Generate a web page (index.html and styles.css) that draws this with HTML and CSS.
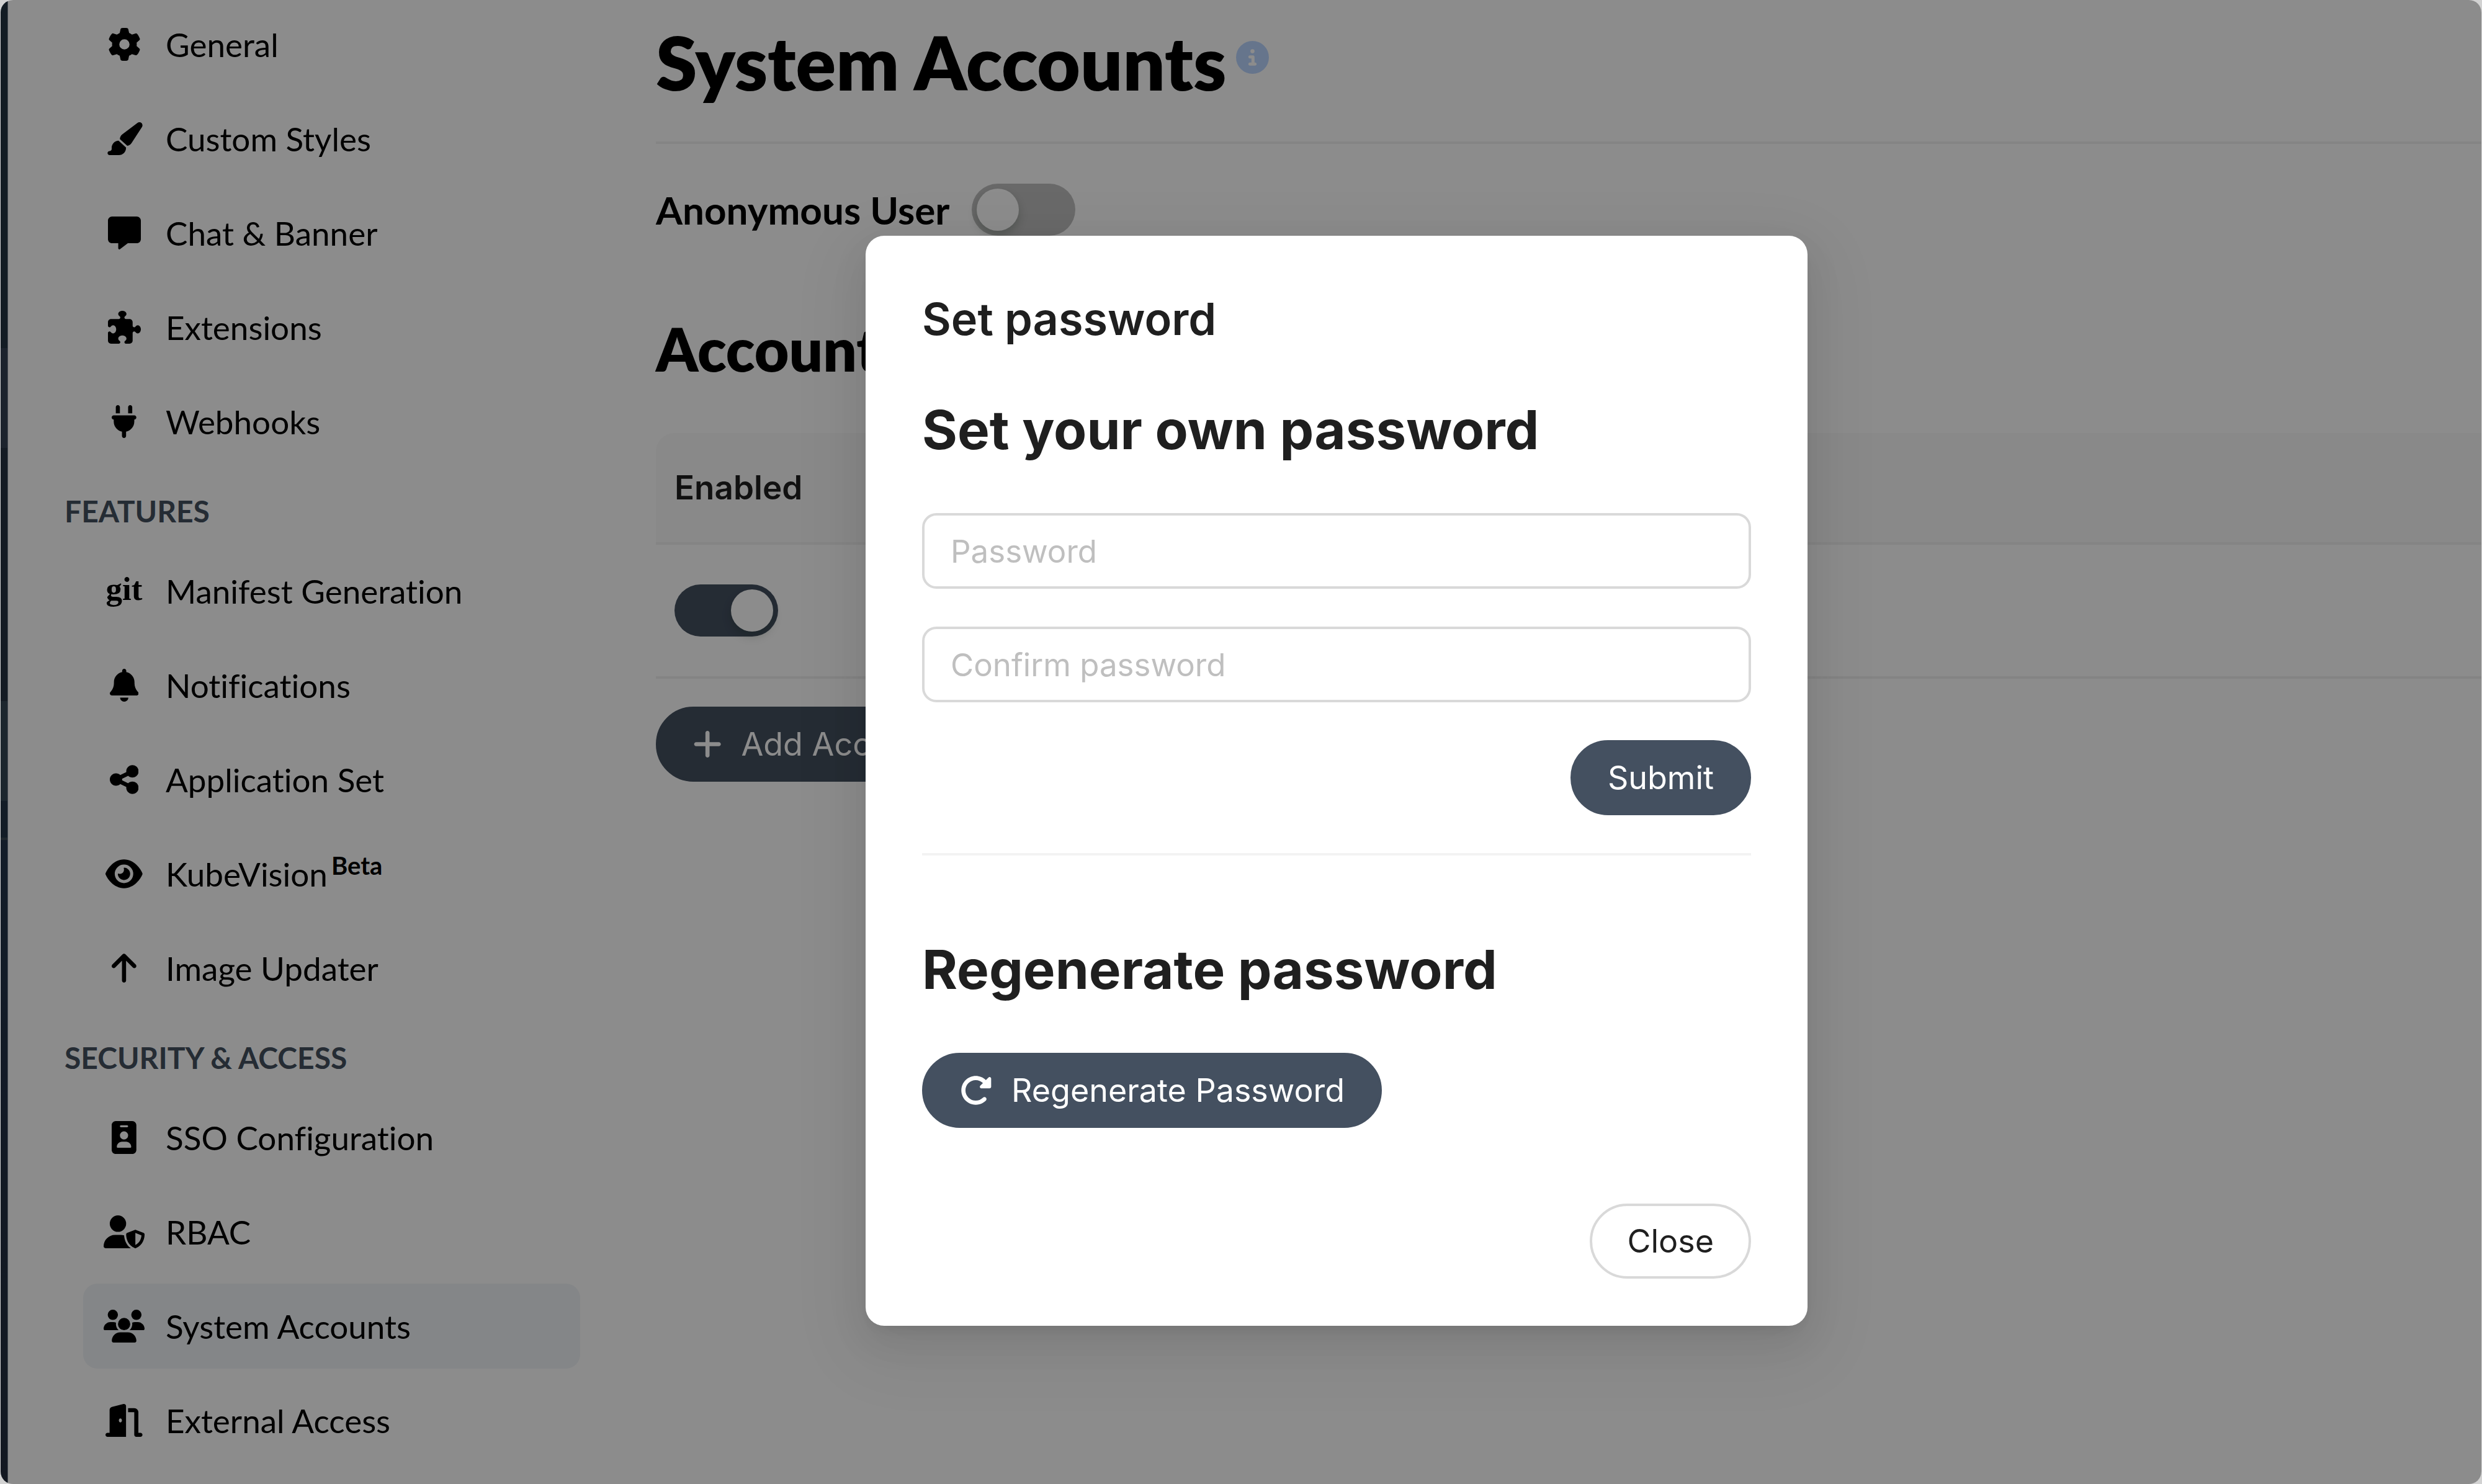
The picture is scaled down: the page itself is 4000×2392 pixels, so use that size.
FILE: index.html
```html
<!DOCTYPE html>
<html lang="en">
<head>
<meta charset="utf-8">
<meta name="viewport" content="width=device-width, initial-scale=1">
<title>System Accounts</title>
<link rel="stylesheet" href="styles.css">
</head>
<body>
<div class="window">
  <div class="rail"></div>

  <nav class="sidebar" aria-label="Settings">
    <ul class="nav-list">
      <li><a class="nav-item" href="#general"><span class="nav-icon"><svg class="icon" viewBox="0 0 512 512"><path d="M495.900 166.600c3.200 8.700 .5 18.400-6.400 24.600l-43.300 39.400c1.100 8.300 1.700 16.800 1.700 25.400s-.6 17.100-1.700 25.400l43.300 39.400c6.900 6.200 9.600 15.900 6.400 24.600c-4.400 11.900-9.700 23.300-15.800 34.300l-4.700 8.100c-6.600 11-14 21.400-22.100 31.200c-5.900 7.200-15.700 9.600-24.500 6.800l-55.700-17.700c-13.400 10.300-28.200 18.900-44 25.400l-12.500 57.100c-2 9.100-9 16.300-18.200 17.800c-13.800 2.300-28 3.500-42.500 3.500s-28.700-1.200-42.500-3.500c-9.200-1.500-16.200-8.700-18.200-17.800l-12.500-57.100c-15.800-6.500-30.600-15.100-44-25.400L83.100 425.900c-8.800 2.800-18.600 .3-24.500-6.800c-8.100-9.800-15.500-20.200-22.100-31.200l-4.700-8.100c-6.100-11-11.400-22.400-15.800-34.300c-3.200-8.700-.5-18.400 6.400-24.600l43.300-39.400C64.600 273.100 64 264.600 64 256s.6-17.100 1.700-25.400L22.400 191.200c-6.900-6.200-9.600-15.900-6.400-24.600c4.400-11.900 9.700-23.300 15.800-34.300l4.700-8.100c6.600-11 14-21.400 22.100-31.200c5.900-7.200 15.700-9.600 24.500-6.800l55.700 17.700c13.400-10.300 28.200-18.900 44-25.400l12.500-57.100c2-9.100 9-16.300 18.200-17.800C227.300 1.200 241.500 0 256 0s28.700 1.200 42.500 3.500c9.200 1.500 16.200 8.700 18.200 17.800l12.500 57.100c15.800 6.500 30.600 15.100 44 25.400l55.700-17.700c8.800-2.800 18.600-.3 24.500 6.800c8.100 9.800 15.500 20.200 22.100 31.200l4.700 8.100c6.100 11 11.400 22.400 15.800 34.300zM256 336a80 80 0 1 0 0-160 80 80 0 1 0 0 160z"/></svg></span>General</a></li>
      <li><a class="nav-item" href="#custom-styles"><span class="nav-icon"><svg class="icon" viewBox="0 0 576 512"><path d="M339.300 367.100c27.300-3.900 51.900-19.400 67.200-42.900L568.200 74.100c12.600-19.500 9.400-45.300-7.600-61.200S517.700-4.400 499.100 9.600L262.400 187.200c-24 18-38.200 46.100-38.400 76.100L339.300 367.100zm-19.600 25.400l-116-104.400C143.900 290.300 96 339.600 96 400c0 3.900 .2 7.800 .6 11.600C98.400 429.100 86.400 448 68.800 448H64c-17.700 0-32 14.300-32 32s14.300 32 32 32H208c61.900 0 112-50.100 112-112c0-2.500-.1-5-.2-7.500z"/></svg></span>Custom Styles</a></li>
      <li><a class="nav-item" href="#chat-banner"><span class="nav-icon"><svg class="icon" viewBox="0 0 512 512"><path d="M64 0C28.700 0 0 28.700 0 64V352c0 35.300 28.700 64 64 64h96v80c0 6.100 3.400 11.600 8.800 14.300s11.900 2.100 16.800-1.500L309.300 416H448c35.300 0 64-28.700 64-64V64c0-35.300-28.700-64-64-64H64z"/></svg></span>Chat &amp; Banner</a></li>
      <li><a class="nav-item" href="#extensions"><span class="nav-icon"><svg class="icon" viewBox="0 0 512 512"><path d="M192 104.800c0-9.200-5.800-17.300-13.200-22.800C167.200 73.300 160 61.300 160 48c0-26.500 28.700-48 64-48s64 21.500 64 48c0 13.300-7.200 25.300-18.800 34c-7.400 5.500-13.200 13.600-13.200 22.800c0 12.800 10.400 23.200 23.200 23.200H336c26.500 0 48 21.500 48 48v56.800c0 12.800 10.400 23.200 23.200 23.200c9.200 0 17.300-5.800 22.800-13.200c8.700-11.600 20.700-18.800 34-18.800c26.500 0 48 28.700 48 64s-21.500 64-48 64c-13.300 0-25.300-7.200-34-18.800c-5.500-7.400-13.600-13.200-22.800-13.200c-12.800 0-23.200 10.400-23.200 23.200V464c0 26.500-21.500 48-48 48H279.200c-12.800 0-23.200-10.400-23.200-23.200c0-9.200 5.800-17.300 13.200-22.800c11.600-8.700 18.800-20.700 18.800-34c0-26.500-28.700-48-64-48s-64 21.500-64 48c0 13.300 7.200 25.300 18.800 34c7.400 5.500 13.200 13.600 13.200 22.800c0 12.800-10.400 23.200-23.200 23.200H48c-26.500 0-48-21.500-48-48V343.200C0 330.400 10.400 320 23.200 320c9.200 0 17.300 5.800 22.800 13.200C54.700 344.800 66.700 352 80 352c26.500 0 48-28.700 48-64s-21.500-64-48-64c-13.300 0-25.300 7.200-34 18.800C40.500 250.200 32.400 256 23.200 256C10.400 256 0 245.600 0 232.800V176c0-26.500 21.500-48 48-48H168.800c12.800 0 23.200-10.400 23.200-23.200z"/></svg></span>Extensions</a></li>
      <li><a class="nav-item" href="#webhooks"><span class="nav-icon"><svg class="icon" viewBox="0 0 384 512"><path d="M96 0C78.300 0 64 14.300 64 32v96h64V32c0-17.700-14.300-32-32-32zM288 0c-17.700 0-32 14.300-32 32v96h64V32c0-17.700-14.300-32-32-32zM32 160c-17.700 0-32 14.300-32 32s14.300 32 32 32v32c0 77.400 55 142 128 156.800V480c0 17.700 14.300 32 32 32s32-14.300 32-32V412.800C297 398 352 333.400 352 256V224c17.700 0 32-14.300 32-32s-14.300-32-32-32H32z"/></svg></span>Webhooks</a></li>
    </ul>

    <h2 class="nav-heading">FEATURES</h2>
    <ul class="nav-list">
      <li><a class="nav-item" href="#manifest-generation"><span class="nav-icon git-mark" aria-hidden="true">git</span>Manifest Generation</a></li>
      <li><a class="nav-item" href="#notifications"><span class="nav-icon"><svg class="icon" viewBox="0 0 448 512"><path d="M224 0c-17.700 0-32 14.300-32 32V51.200C119 66 64 130.600 64 208v18.800c0 47-17.300 92.400-48.500 127.600l-7.400 8.300c-8.400 9.400-10.400 22.900-5.300 34.400S19.400 416 32 416H416c12.600 0 24-7.400 29.200-18.900s3.100-25-5.300-34.400l-7.400-8.300C401.300 319.200 384 273.900 384 226.800V208c0-77.400-55-142-128-156.800V32c0-17.700-14.300-32-32-32zm45.300 493.300c12-12 18.700-28.300 18.700-45.300H224 160c0 17 6.700 33.300 18.700 45.300s28.300 18.700 45.300 18.700s33.300-6.700 45.300-18.700z"/></svg></span>Notifications</a></li>
      <li><a class="nav-item" href="#application-set"><span class="nav-icon"><svg class="icon" viewBox="0 0 448 512"><path d="M352 224c53 0 96-43 96-96s-43-96-96-96s-96 43-96 96c0 4 .2 8 .7 11.900l-94.100 47C145.400 170.200 121.900 160 96 160c-53 0-96 43-96 96s43 96 96 96c25.900 0 49.400-10.200 66.600-26.900l94.100 47c-.5 3.900-.7 7.800-.7 11.900c0 53 43 96 96 96s96-43 96-96s-43-96-96-96c-25.900 0-49.400 10.200-66.600 26.900l-94.100-47c.5-3.900 .7-7.800 .7-11.900s-.2-8-.7-11.900l94.100-47C302.600 213.800 326.100 224 352 224z"/></svg></span>Application Set</a></li>
      <li><a class="nav-item" href="#kubevision"><span class="nav-icon"><svg class="icon" viewBox="0 0 576 512"><path d="M288 32c-80.800 0-145.500 36.800-192.600 80.600C48.600 156 17.300 208 2.500 243.700c-3.300 7.900-3.300 16.700 0 24.600C17.300 304 48.600 356 95.400 399.400C142.500 443.200 207.200 480 288 480s145.500-36.800 192.600-80.600c46.800-43.500 78.100-95.400 93-131.100c3.300-7.900 3.300-16.700 0-24.600c-14.900-35.700-46.200-87.700-93-131.100C433.500 68.800 368.800 32 288 32zM144 256a144 144 0 1 1 288 0 144 144 0 1 1 -288 0zm144-64c0 35.300-28.700 64-64 64c-7.100 0-13.900-1.200-20.300-3.300c-5.500-1.800-11.900 1.600-11.700 7.400c.3 6.900 1.300 13.800 3.200 20.700c13.700 51.200 66.400 81.600 117.600 67.900s81.600-66.400 67.900-117.600c-11.100-41.500-47.800-69.400-88.600-71.100c-5.800-.2-9.200 6.100-7.400 11.700c2.100 6.400 3.300 13.200 3.300 20.300z"/></svg></span><span>KubeVision<sup class="beta">Beta</sup></span></a></li>
      <li><a class="nav-item" href="#image-updater"><span class="nav-icon"><svg class="icon" viewBox="0 0 384 512"><path d="M214.600 41.400c-12.500-12.500-32.800-12.500-45.300 0l-160 160c-12.500 12.500-12.500 32.800 0 45.300s32.800 12.500 45.300 0L160 141.200V448c0 17.700 14.300 32 32 32s32-14.300 32-32V141.200L329.400 246.600c12.500 12.500 32.800 12.500 45.300 0s12.500-32.800 0-45.300l-160-160z"/></svg></span>Image Updater</a></li>
    </ul>

    <h2 class="nav-heading">SECURITY &amp; ACCESS</h2>
    <ul class="nav-list">
      <li><a class="nav-item" href="#sso"><span class="nav-icon"><svg class="icon" viewBox="0 0 384 512"><path d="M64 0C28.700 0 0 28.700 0 64V448c0 35.300 28.700 64 64 64H320c35.300 0 64-28.700 64-64V64c0-35.300-28.700-64-64-64H64zm96 320h64c44.200 0 80 35.800 80 80c0 8.800-7.200 16-16 16H96c-8.800 0-16-7.200-16-16c0-44.200 35.800-80 80-80zm-32-96a64 64 0 1 1 128 0 64 64 0 1 1 -128 0zM144 64h96c8.800 0 16 7.200 16 16s-7.200 16-16 16H144c-8.800 0-16-7.200-16-16s7.200-16 16-16z"/></svg></span>SSO Configuration</a></li>
      <li><a class="nav-item" href="#rbac"><span class="nav-icon"><svg class="icon" viewBox="0 0 640 512"><path d="M224 256A128 128 0 1 0 224 0a128 128 0 1 0 0 256zm-45.700 48C79.800 304 0 383.800 0 482.300C0 498.700 13.300 512 29.700 512H418.300c1.800 0 3.500-.2 5.300-.5c-76.300-55.100-99.800-141-103.100-200.200c-16.100-4.800-33.100-7.300-50.700-7.300H178.300zm308.800-78.300l-120 48C358 277.400 352 286.200 352 296c0 63.300 25.900 168.800 134.800 214.200c5.900 2.500 12.600 2.500 18.500 0C614.100 464.800 640 359.300 640 296c0-9.800-6-18.600-15.100-22.300l-120-48c-5.700-2.300-12.100-2.300-17.800 0zM591.400 312c-3.900 50.700-27.200 116.700-95.400 149.700V273.800L591.400 312z"/></svg></span>RBAC</a></li>
      <li><a class="nav-item active" href="#system-accounts" aria-current="page"><span class="nav-icon"><svg class="icon" viewBox="0 0 640 512"><path d="M144 0a80 80 0 1 1 0 160A80 80 0 1 1 144 0zM512 0a80 80 0 1 1 0 160A80 80 0 1 1 512 0zM0 298.700C0 239.800 47.800 192 106.700 192h42.700c15.900 0 31 3.500 44.600 9.700c-1.300 7.200-1.900 14.700-1.900 22.300c0 38.200 16.800 72.500 43.300 96c-.2 0-.4 0-.7 0H21.300C9.600 320 0 310.400 0 298.700zM405.300 320c-.2 0-.4 0-.7 0c26.600-23.500 43.300-57.800 43.300-96c0-7.600-.7-15-1.900-22.300c13.600-6.300 28.700-9.700 44.600-9.700h42.700C592.200 192 640 239.800 640 298.700c0 11.800-9.600 21.300-21.300 21.300H405.300zM224 224a96 96 0 1 1 192 0 96 96 0 1 1 -192 0zM128 485.300C128 411.700 187.700 352 261.300 352H378.700C452.300 352 512 411.700 512 485.300c0 14.700-11.900 26.700-26.700 26.700H154.700c-14.700 0-26.700-11.900-26.700-26.700z"/></svg></span>System Accounts</a></li>
      <li><a class="nav-item" href="#external-access"><span class="nav-icon"><svg class="icon" viewBox="0 0 576 512"><path d="M320 32c0-9.900-4.500-19.200-12.300-25.200S289.800-1.400 280.200 1l-179.900 45C79 51.300 64 70.500 64 92.500V448H32c-17.700 0-32 14.300-32 32s14.300 32 32 32H96 288h32V480 32zM256 256c0 17.700-10.700 32-24 32s-24-14.300-24-32s10.700-32 24-32s24 14.300 24 32zm96-128h96V480c0 17.700 14.300 32 32 32h64c17.700 0 32-14.300 32-32s-14.300-32-32-32H512V128c0-35.300-28.700-64-64-64H352v64z"/></svg></span>External Access</a></li>
    </ul>
  </nav>

  <main class="content">
    <header class="page-header">
      <h1 class="page-title">System Accounts</h1>
      <svg class="icon info" viewBox="0 0 512 512" role="img" aria-label="Info"><path d="M256 512A256 256 0 1 0 256 0a256 256 0 1 0 0 512zM216 336h24V272H216c-13.300 0-24-10.700-24-24s10.700-24 24-24h48c13.300 0 24 10.700 24 24v88h8c13.300 0 24 10.700 24 24s-10.700 24-24 24H216c-13.300 0-24-10.700-24-24s10.700-24 24-24zm40-208a32 32 0 1 1 0 64 32 32 0 1 1 0-64z"/></svg>
    </header>

    <div class="setting-row">
      <label class="setting-label" for="anonymous">Anonymous User</label>
      <input class="switch" id="anonymous" type="checkbox" role="switch">
    </div>

    <h2 class="section-title">Accounts</h2>
    <table class="accounts">
      <thead>
        <tr><th scope="col">Enabled</th></tr>
      </thead>
      <tbody>
        <tr><td><input class="switch" type="checkbox" role="switch" aria-label="Enabled" checked></td></tr>
      </tbody>
    </table>
    <button class="button primary" type="button"><svg class="icon" viewBox="0 0 448 512"><path d="M256 80c0-17.700-14.300-32-32-32s-32 14.300-32 32V224H48c-17.700 0-32 14.300-32 32s14.300 32 32 32H192V432c0 17.700 14.300 32 32 32s32-14.300 32-32V288H400c17.700 0 32-14.300 32-32s-14.300-32-32-32H256V80z"/></svg>Add Account</button>
  </main>

  <div class="overlay">
    <section class="modal" role="dialog" aria-modal="true" aria-labelledby="modal-title">
      <h2 class="modal-title" id="modal-title">Set password</h2>
      <h3 class="modal-heading">Set your own password</h3>
      <form class="password-form">
        <input class="text-input" type="password" placeholder="Password" aria-label="Password">
        <input class="text-input" type="password" placeholder="Confirm password" aria-label="Confirm password">
        <button class="button primary align-end" type="submit">Submit</button>
      </form>
      <hr class="divider">
      <h3 class="modal-heading">Regenerate password</h3>
      <button class="button primary" type="button"><svg class="icon" viewBox="0 0 512 512"><path d="M463.500 224H472c13.300 0 24-10.700 24-24V72c0-9.700-5.800-18.500-14.800-22.200s-19.300-1.700-26.200 5.200L413.400 96.600c-87.600-86.500-228.700-86.200-315.800 1c-87.500 87.500-87.500 229.300 0 316.800s229.300 87.500 316.800 0c12.500-12.500 12.500-32.800 0-45.300s-32.800-12.500-45.300 0c-62.500 62.500-163.800 62.500-226.300 0s-62.500-163.800 0-226.300c62.200-62.200 162.700-62.500 225.300-1L327 183c-6.900 6.900-8.900 17.200-5.200 26.200s12.500 14.800 22.200 14.800H463.500z"/></svg>Regenerate Password</button>
      <footer class="modal-footer">
        <button class="button" type="button">Close</button>
      </footer>
    </section>
  </div>
</div>
</body>
</html>
```
FILE: styles.css
```css
* {
  box-sizing: border-box;
}

body,
h1,
h2,
h3,
ul {
  margin: 0;
}

body {
  background: #d2d2d2;
  color: #000;
  font-family: Lato, sans-serif;
  font-size: 53px;
  font-variant-ligatures: none;
}

.window {
  position: relative;
  display: flex;
  min-height: 100vh;
  margin: 0 1px;
  overflow: hidden;
  border-radius: 20px;
  background: #fff;
}

.icon {
  display: block;
  height: 53px;
  fill: currentColor;
}

/* Edge of the collapsed main menu */
.rail {
  flex: none;
  width: 12px;
  border-right: 1px solid #87929f;
  background: linear-gradient(#243342 0 561px, #334052 561px 722px, #253243 722px 1130px, #334554 1130px 1291px, #243345 1291px 1350px, #3a4553 1350px 1354px, #24344a 1354px, #242d3d);
}

/* Sidebar */
.sidebar {
  flex: none;
  width: 983px;
  padding: 3px 61px 0 91px;
}

.nav-list {
  display: flex;
  flex-direction: column;
  gap: 15px;
  padding: 0 0 0 30px;
  list-style: none;
}

.nav-item {
  display: flex;
  align-items: center;
  gap: 34px;
  height: 137px;
  padding: 0 33px;
  border-radius: 23px;
  color: inherit;
  text-decoration: none;
  white-space: nowrap;
}

.nav-item.active {
  background: #f0f4f7;
}

.nav-icon {
  display: flex;
  flex: none;
  justify-content: center;
  width: 66px;
}

.git-mark {
  padding-bottom: 8px;
  font-family: "Liberation Serif", serif;
  font-weight: 700;
}

.beta {
  margin-left: 6px;
  font-size: 40px;
  font-weight: 700;
  line-height: 0;
}

.nav-heading {
  padding: 46px 0 30px;
  color: #445060;
  font-size: 48px;
  font-weight: 700;
  line-height: 60px;
}

/* Page */
.content {
  flex: 1;
  min-width: 0;
  padding: 28px 0 0 61px;
}

.page-header {
  display: flex;
  align-items: flex-start;
  gap: 15px;
  padding-bottom: 56px;
  border-bottom: 4px solid #f0f0f0;
}

.page-title {
  font-size: 120px;
  font-weight: 800;
  line-height: 144px;
}

.info {
  margin-top: 38px;
  color: #bbd6ff;
}

.setting-row {
  display: flex;
  align-items: center;
  gap: 36px;
  margin-top: 64px;
}

.setting-label {
  font-size: 62px;
  font-weight: 700;
}

.switch {
  position: relative;
  display: block;
  flex: none;
  width: 167px;
  height: 84px;
  margin: 0;
  border-radius: 42px;
  background: #bfbfbf;
  appearance: none;
}

.switch::before {
  content: "";
  position: absolute;
  top: 8px;
  left: 8px;
  width: 68px;
  height: 68px;
  border-radius: 50%;
  background: #fff;
  box-shadow: 0 8px 15px rgba(0, 35, 11, 0.2);
}

.switch:checked {
  background: #445060;
}

.switch:checked::before {
  right: 8px;
  left: auto;
}

.section-title {
  margin: 124px 0 78px;
  font-size: 96px;
  font-weight: 800;
  line-height: 116px;
}

.accounts {
  width: 100%;
  margin-bottom: 45px;
  border-collapse: separate;
  border-spacing: 0;
}

.accounts th {
  height: 180px;
  padding: 0 30px;
  border-bottom: 4px solid #f0f0f0;
  border-top-left-radius: 30px;
  background: #fafafa;
  color: #1f1f1f;
  font-family: Inter, sans-serif;
  font-size: 53px;
  font-weight: 600;
  text-align: left;
}

.accounts td {
  height: 216px;
  padding: 0 30px;
  border-bottom: 4px solid #f0f0f0;
}

.button {
  display: inline-flex;
  align-items: center;
  justify-content: center;
  gap: 31px;
  height: 121px;
  padding: 0 56px;
  border: 4px solid #d9d9d9;
  border-radius: 61px;
  background: #fff;
  color: #1f1f1f;
  font-family: Inter, sans-serif;
  font-size: 52px;
  white-space: nowrap;
}

.button.primary {
  border-color: #445060;
  background: #445060;
  color: #fff;
}

/* Dialog */
.overlay {
  position: absolute;
  inset: 0;
  display: flex;
  align-items: flex-start;
  justify-content: center;
  padding: 380px 0 0 308px;
  background: rgba(0, 0, 0, 0.45);
}

.modal {
  width: 1518px;
  padding: 78px 91px 76px;
  border-radius: 30px;
  background: #fff;
  color: #1f1f1f;
  font-family: Inter, sans-serif;
  box-shadow:
    0 23px 61px rgba(0, 0, 0, 0.08),
    0 11px 23px -15px rgba(0, 0, 0, 0.12),
    0 34px 106px 30px rgba(0, 0, 0, 0.05);
}

.modal-title {
  margin-bottom: 71px;
  font-size: 72px;
  font-weight: 600;
  line-height: 112px;
}

.modal-heading {
  margin-bottom: 82px;
  font-size: 87px;
  font-weight: 700;
  line-height: 104px;
}

.password-form {
  display: flex;
  flex-direction: column;
  gap: 61px;
}

.text-input {
  width: 100%;
  height: 122px;
  padding: 0 42px;
  border: 4px solid #d9d9d9;
  border-radius: 23px;
  background: #fff;
  color: #1f1f1f;
  font-family: Inter, sans-serif;
  font-size: 51px;
}

.text-input::placeholder {
  color: #bfbfbf;
}

.align-end {
  align-self: flex-end;
}

.divider {
  margin: 61px 0 132px;
  border: 0;
  border-top: 4px solid #f3f3f3;
}

.modal-footer {
  display: flex;
  justify-content: flex-end;
  margin-top: 122px;
}
```
